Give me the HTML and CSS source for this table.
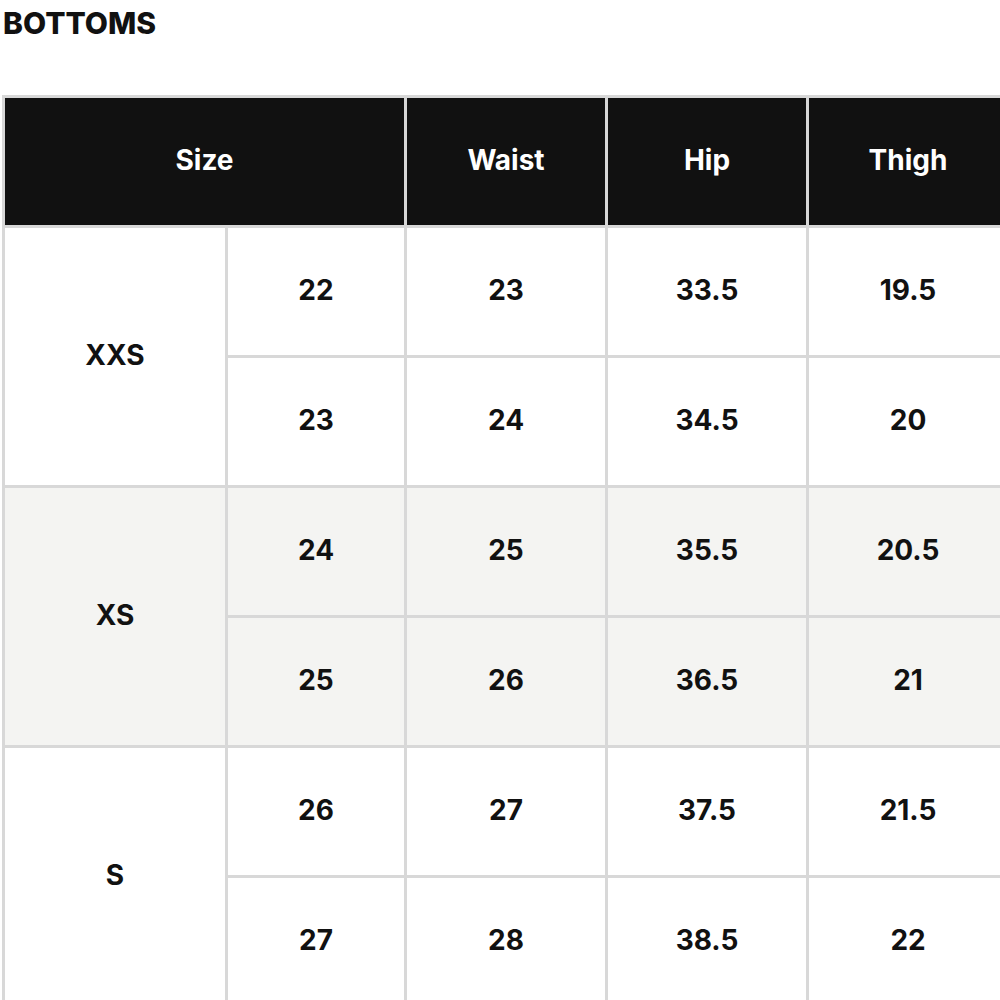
FILE: index.html
```html
<!DOCTYPE html>
<html lang="en">
<head>
<meta charset="utf-8">
<title>Bottoms size chart</title>
<link rel="stylesheet" href="styles.css">
</head>
<body>
<div class="page">
  <h2 class="title">BOTTOMS</h2>
  <table class="chart">
    <colgroup>
      <col class="c-size">
      <col class="c-num">
      <col class="c-m">
      <col class="c-m">
      <col class="c-m">
    </colgroup>
    <thead>
      <tr>
        <th colspan="2">Size</th>
        <th>Waist</th>
        <th>Hip</th>
        <th>Thigh</th>
      </tr>
    </thead>
    <tbody class="grp">
      <tr><td rowspan="2">XXS</td><td>22</td><td>23</td><td>33.5</td><td>19.5</td></tr>
      <tr><td>23</td><td>24</td><td>34.5</td><td>20</td></tr>
    </tbody>
    <tbody class="grp alt">
      <tr><td rowspan="2">XS</td><td>24</td><td>25</td><td>35.5</td><td>20.5</td></tr>
      <tr><td>25</td><td>26</td><td>36.5</td><td>21</td></tr>
    </tbody>
    <tbody class="grp">
      <tr><td rowspan="2">S</td><td>26</td><td>27</td><td>37.5</td><td>21.5</td></tr>
      <tr><td>27</td><td>28</td><td>38.5</td><td>22</td></tr>
    </tbody>
  </table>
</div>
</body>
</html>
```

FILE: styles.css
```css
html, body {
  margin: 0;
  padding: 0;
  background: #ffffff;
  overflow: hidden;
}

.page {
  padding: 0 0 0 2px;
  font-family: Inter, "Noto Sans", "Liberation Sans", sans-serif;
  color: #111111;
}

.title {
  margin: 0;
  padding: 7px 0 0 1px;
  height: 88px;
  font-size: 30px;
  font-weight: 800;
  letter-spacing: 0;
  line-height: 32px;
  color: #111111;
}

.chart {
  border-collapse: collapse;
  table-layout: fixed;
  width: 1005px;
}

.c-size { width: 223px; }
.c-num { width: 179px; }
.c-m { width: 201px; }

.chart th,
.chart td {
  border: 3px solid #d8d8d8;
  text-align: center;
  vertical-align: middle;
  height: 123px;
  padding: 0 0 4px 0;
  font-size: 28px;
  font-weight: 700;
}

.chart th {
  background: #111111;
  color: #ffffff;
}

.chart td {
  color: #111111;
}

.grp.alt td {
  background: #f4f4f2;
}
```
